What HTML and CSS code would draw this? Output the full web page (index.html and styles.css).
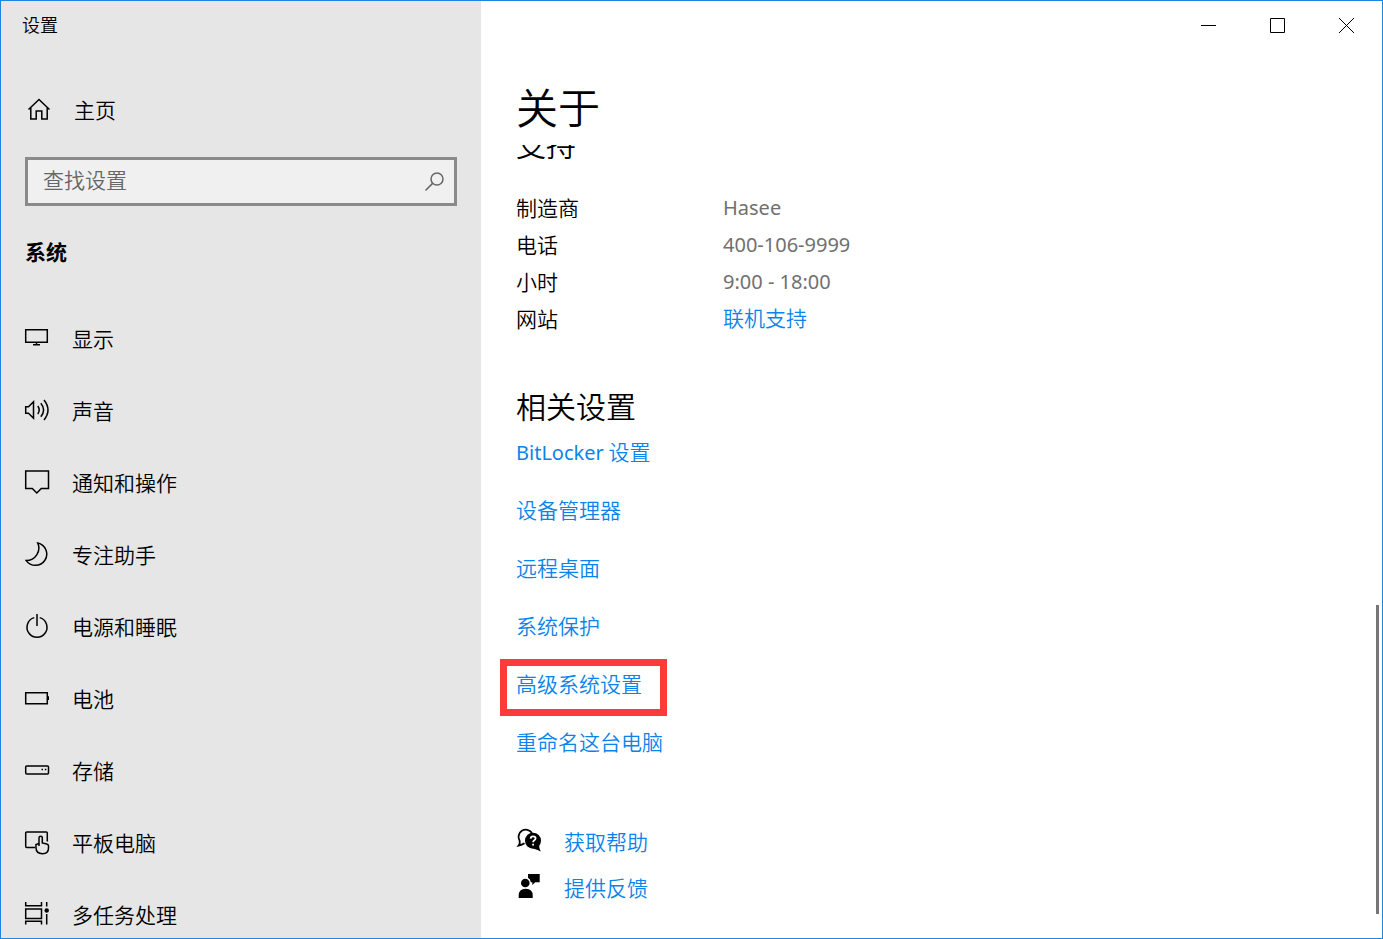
FILE: index.html
```html
<!DOCTYPE html>
<html lang="zh-CN">
<head>
<meta charset="utf-8">
<meta name="viewport" content="width=device-width, initial-scale=1">
<title>设置</title>
<link rel="stylesheet" href="styles.css">
</head>
<body>
<div class="window">
  <aside class="sidebar">
    <div class="app-title">设置</div>
    <a class="home" href="#">
      <svg class="icon" viewBox="0 0 26 26"><path d="M2.5 12.5 13 2.5l10.500 10M4.800 11v11h5.400v-8h5.600v8h5.400V11"/></svg>
      <span>主页</span>
    </a>
    <div class="search">
      <input class="search-input" type="search" placeholder="查找设置" aria-label="查找设置">
      <button class="search-button" type="button" aria-label="搜索">
        <svg class="icon icon-search" viewBox="0 0 26 26"><circle cx="16" cy="10" r="6"/><path d="M11.600 14.400 4.500 21.500"/></svg>
      </button>
    </div>
    <h2 class="group-title">系统</h2>
    <nav class="nav">
      <a class="nav-item" href="#"><svg class="icon" viewBox="0 0 26 26"><path d="M1.700 3.700h21.600v12.600H1.700zM12.500 16.300v2.400M9 18.700h7"/></svg><span>显示</span></a>
      <a class="nav-item" href="#"><svg class="icon" viewBox="0 0 26 26"><path d="M1.700 8.700h2.800l5-5v16.600l-5-5H1.700zM13.800 8q2.800 4 0 8M16.800 5.300q5.600 6.700 0 13.400M20 2q8 10 0 20"/></svg><span>声音</span></a>
      <a class="nav-item" href="#"><svg class="icon" viewBox="0 0 26 26"><path d="M1.700 1h22.800v17.500h-7.200l-4.500 4.500-4.500-4.500H1.700z"/></svg><span>通知和操作</span></a>
      <a class="nav-item" href="#"><svg class="icon" viewBox="0 0 26 26"><path d="M13.700 1A11.300 11.300 0 1 1 2.200 18.600 12.500 12.500 0 0 0 13.700 1z"/></svg><span>专注助手</span></a>
      <a class="nav-item" href="#"><svg class="icon" viewBox="0 0 26 26"><path d="M10.300 3.600a10 10 0 1 0 5.400 0M13 0v12"/></svg><span>电源和睡眠</span></a>
      <a class="nav-item" href="#"><svg class="icon" viewBox="0 0 26 26"><path d="M1.700 6.700h21.600v11H1.700z"/><path class="solid" d="M23 10.300h2v3.700h-2z"/></svg><span>电池</span></a>
      <a class="nav-item" href="#"><svg class="icon" viewBox="0 0 26 26"><rect x="1.700" y="8" width="22.800" height="8" rx="1"/><path class="solid" d="M17.500 10.800h1.500v1.500h-1.500zM20.800 10.800h1.500v1.500h-1.500z"/></svg><span>存储</span></a>
      <a class="nav-item" href="#"><svg class="icon" viewBox="0 0 26 26"><path d="M11 17.500H2.700a1 1 0 0 1-1-1V3a1 1 0 0 1 1-1h19.600a1 1 0 0 1 1 1v8.500"/><path d="M15 16V8q0-1.700 1.700-1.700T18.300 8v5l4.500 1q1.700.500 1.700 2v2q0 5.700-6 5.700-6.500 0-6.500-6.200v-3l3-1"/></svg><span>平板电脑</span></a>
      <a class="nav-item" href="#"><svg class="icon" viewBox="0 0 26 26"><path d="M1.700 0v3.700h15.800V0M1.700 7h15.800v9.500H1.700zM1.700 22.500v-3.300h15.800v3.300M22.700 0v4.500M22.700 12v10.500"/><circle class="solid" cx="22.700" cy="8.500" r="2.200"/></svg><span>多任务处理</span></a>
    </nav>
  </aside>

  <main class="main">
    <div class="caption">
      <button class="caption-button" type="button" aria-label="最小化"><svg class="glyph" viewBox="0 0 15 15"><path d="M0 7.500h15"/></svg></button>
      <button class="caption-button" type="button" aria-label="最大化"><svg class="glyph" viewBox="0 0 15 15"><path d="M.5.5h14v14H.5z"/></svg></button>
      <button class="caption-button" type="button" aria-label="关闭"><svg class="glyph" viewBox="0 0 15 15"><path d="m0 0 15 15M15 0 0 15"/></svg></button>
    </div>
    <h1 class="page-title">关于</h1>
    <div class="scroll-area">
      <section class="support">
        <h2 class="section-title">支持</h2>
        <dl class="facts">
          <dt>制造商</dt><dd>Hasee</dd>
          <dt>电话</dt><dd>400-106-9999</dd>
          <dt>小时</dt><dd>9:00 - 18:00</dd>
          <dt>网站</dt><dd><a class="link" href="#">联机支持</a></dd>
        </dl>
      </section>
      <section class="related">
        <h2 class="section-title">相关设置</h2>
        <ul class="links">
          <li><a class="link" href="#"><span class="latin">BitLocker</span> 设置</a></li>
          <li><a class="link" href="#">设备管理器</a></li>
          <li><a class="link" href="#">远程桌面</a></li>
          <li><a class="link" href="#">系统保护</a></li>
          <li><a class="link marked" href="#">高级系统设置</a></li>
          <li><a class="link" href="#">重命名这台电脑</a></li>
        </ul>
      </section>
      <ul class="support-links">
        <li><a class="link help" href="#"><svg class="icon" viewBox="0 0 26 26"><path d="M8.500 15.300Q6 17 2.600 17.600 4.300 15.500 3.700 13A7.300 7.300 0 1 1 16 5" stroke-width="1.800"/><circle class="solid" cx="17" cy="12.700" r="8"/><path class="solid" d="M17 20.500q4 1 7.800 3-2-3-1.600-6.500z"/><path class="cut" stroke-width="1.800" d="M14.600 10.600q.2-2.300 2.500-2.300 2.500 0 2.500 2 0 1.200-1.300 2-1.200.7-1.200 2M17.100 15.700v1.700"/></svg><span>获取帮助</span></a></li>
        <li><a class="link help" href="#"><svg class="icon" viewBox="0 0 26 26"><circle class="solid" cx="9.300" cy="9" r="4.300"/><path class="solid" d="M2.700 24v-2.500q0-6.800 7-6.800t7 6.800V24zM12 0h11.700v8.300h-4.500L16.300 11V8.300h-1.500Q14.500 5 12 3.800z"/></svg><span>提供反馈</span></a></li>
      </ul>
    </div>
    <div class="scroll-thumb"></div>
  </main>
</div>
</body>
</html>
```
FILE: styles.css
```css
* {
  box-sizing: border-box;
}

body {
  margin: 0;
  font-family: "Noto Sans CJK SC", "Noto Sans", sans-serif;
  font-size: 21px;
  font-weight: 350;
  line-height: 30px;
  color: #000;
}

h1,
h2,
ul,
dl,
dd {
  margin: 0;
  padding: 0;
}

ul {
  list-style: none;
}

a {
  color: inherit;
  text-decoration: none;
}

button {
  padding: 0;
  border: 0;
  background: none;
}

.window {
  display: grid;
  grid-template-columns: 480px 1fr;
  height: 100vh;
  border: 1px solid #1c86e0;
  background: #fff;
  overflow: hidden;
}

.icon {
  flex: none;
  width: 26px;
  height: 26px;
  fill: none;
  stroke: #000;
  stroke-width: 1.5;
}

.icon .solid {
  fill: #000;
  stroke: none;
}

.icon .cut {
  stroke: #fff;
}

/* Sidebar */

.sidebar {
  min-height: 0;
  padding: 0 24px;
  background: #e6e6e6;
  overflow: hidden;
}

.app-title {
  padding: 8px 0 12px;
  margin-left: -3px;
  font-size: 18px;
}

.home {
  display: flex;
  align-items: center;
  gap: 22px;
  height: 60px;
  margin-top: 29px;
  padding-left: 1px;
}

.home span,
.nav-item span {
  padding-bottom: 2px;
}

.search {
  display: flex;
  align-items: center;
  height: 49px;
  margin-top: 17px;
  border: 3px solid #8a8a8a;
  background: #f0f0f0;
}

.search-input {
  flex: 1;
  min-width: 0;
  padding: 0 15px 6px;
  border: 0;
  outline: 0;
  background: none;
  font: inherit;
  color: #000;
}

.search-input::placeholder {
  color: #666;
  opacity: 1;
}

.search-button {
  display: flex;
  padding-right: 7px;
}

.icon-search {
  stroke: #666;
}

.group-title {
  margin-top: 30px;
  font-size: 21px;
  font-weight: 700;
  line-height: 30px;
}

.nav {
  margin-top: 37px;
}

.nav-item {
  display: flex;
  align-items: center;
  gap: 22px;
  height: 72px;
  margin-left: -1px;
}

/* Main pane */

.main {
  position: relative;
  display: flex;
  flex-direction: column;
  min-height: 0;
}

.caption {
  display: flex;
  justify-content: flex-end;
  padding-right: 1px;
}

.caption-button {
  display: flex;
  align-items: center;
  justify-content: center;
  width: 69px;
  height: 48px;
}

.glyph {
  width: 15px;
  height: 15px;
  fill: none;
  stroke: #000;
}

.page-title {
  padding: 27px 35px 9px;
  font-size: 42px;
  font-weight: 350;
  line-height: 60px;
}

.scroll-area {
  flex: 1;
  min-height: 0;
  padding: 0 35px;
  overflow: hidden;
}

.section-title {
  font-size: 30px;
  font-weight: 350;
  line-height: 42px;
}

.support {
  margin-top: -23px;
}

.facts {
  display: grid;
  grid-template-columns: 207px 1fr;
  margin-top: 25px;
  line-height: 37px;
}

.facts dd {
  font-family: "Noto Sans", "Noto Sans CJK SC", sans-serif;
  font-size: 20px;
  font-weight: 400;
  color: #707070;
}

.link {
  font-size: 21px;
  font-weight: 350;
  color: #0a84ea;
}

.latin {
  font-family: "Noto Sans", sans-serif;
  font-size: 20px;
  font-weight: 400;
}

.related {
  margin-top: 47px;
}

.links {
  display: grid;
  gap: 28px;
  margin-top: 10px;
}

.links li {
  height: 30px;
}

.marked {
  position: relative;
}

.marked::after {
  content: "";
  position: absolute;
  inset: -9px -25px -18px -16px;
  border: 7px solid #fb3a3a;
  pointer-events: none;
}

.support-links {
  display: grid;
  gap: 16px;
  margin-top: 70px;
}

.help {
  display: flex;
  align-items: center;
  gap: 22px;
}

.scroll-thumb {
  position: absolute;
  right: 3px;
  bottom: 24px;
  width: 3px;
  height: 33%;
  background: #7a7574;
}
```
